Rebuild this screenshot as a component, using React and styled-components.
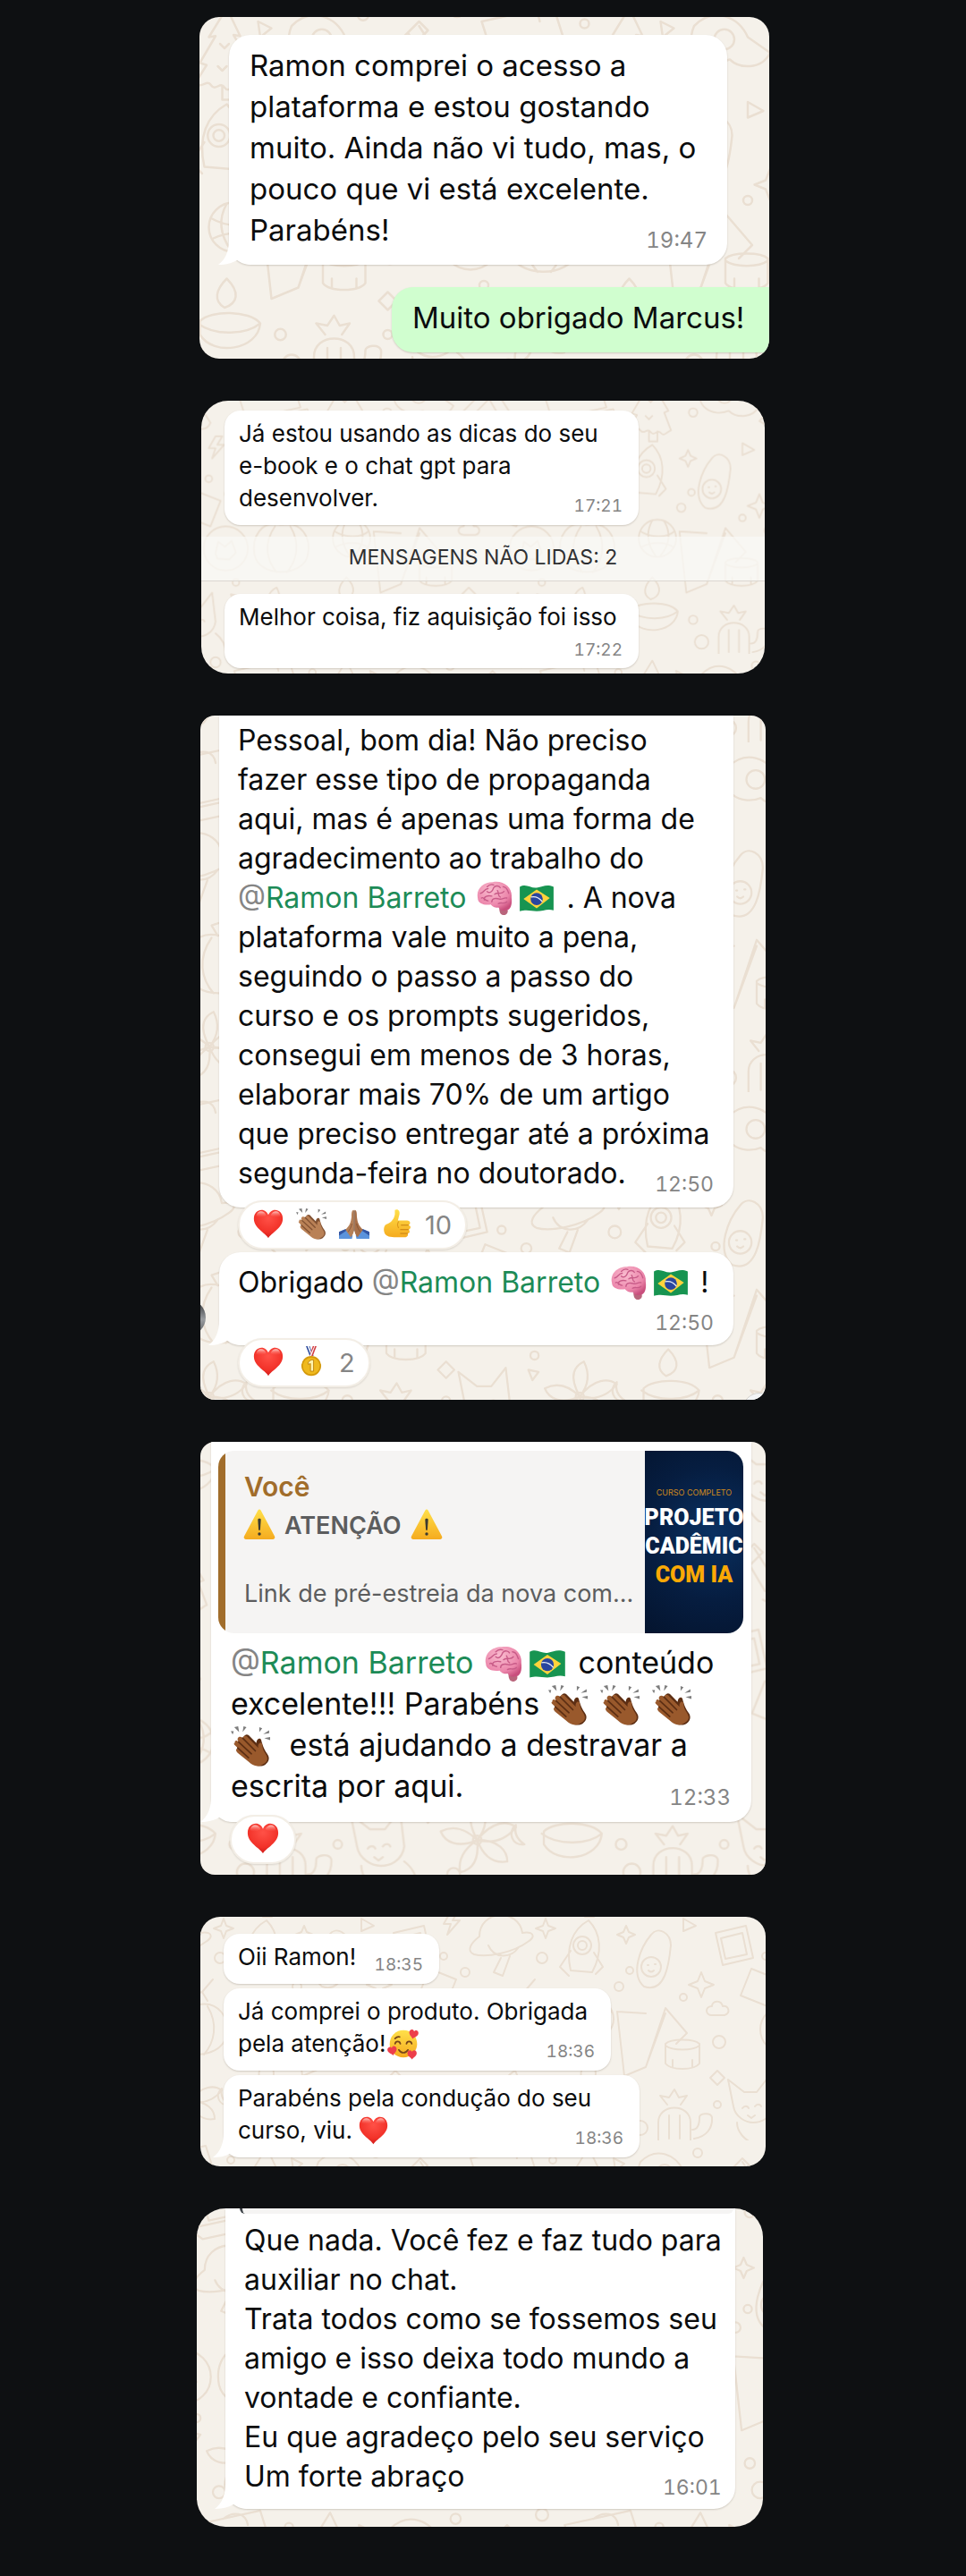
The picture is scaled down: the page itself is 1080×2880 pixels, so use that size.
import React, { useId } from "react";
import styled, { createGlobalStyle } from "styled-components";

const GlobalStyle = createGlobalStyle`
  * { box-sizing: border-box; }
  html, body { margin: 0; background: #0e1012; }
  body { font-family: Inter, "Liberation Sans", sans-serif; color: #0b0c0d; }
`;

/* ---------- page ---------- */

const Page = styled.main`
  display: flex;
  flex-direction: column;
  gap: 47px;
  width: 100%;
  max-width: 640px;
  margin: 0 auto;
  padding: 19px 0 55px;
`;

const sizes = {
  xlarge: { font: 34, line: 46, time: 24, timeLine: 28, drop: 4, radius: 24, pad: "12px 22px 15px 23px" },
  large: { font: 33, line: 46, time: 24, timeLine: 28, drop: 3, radius: 24, pad: "11px 22px 16px 23px" },
  medium: { font: 32, line: 44, time: 23, timeLine: 28, drop: 4, radius: 24, pad: "11px 22px 15px 21px" },
  small: { font: 26, line: 36, time: 19, timeLine: 20, drop: 1, radius: 18, pad: "8px 18px 12px 16px" },
};

const Card = styled.section`
  position: relative;
  isolation: isolate;
  overflow: hidden;
  display: flex;
  flex-direction: column;
  align-items: flex-start;
  align-self: ${(p) => p.$align || "center"};
  width: 100%;
  max-width: ${(p) => p.$width || 632}px;
  padding: ${(p) => p.$pad};
  gap: ${(p) => p.$gap || 0}px;
  border-radius: ${(p) => p.$radius}px;
  background: #f5f1ea;
`;

const WallpaperSvg = styled.svg`
  position: absolute;
  inset: 0;
  z-index: -1;
  width: 100%;
  height: 100%;
  fill: none;
  stroke: #eadfd2;
  stroke-width: 2;
  stroke-linecap: round;
  stroke-linejoin: round;
`;

/* ---------- messages ---------- */

const Bubble = styled.article`
  position: relative;
  isolation: isolate;
  display: grid;
  align-content: start;
  width: ${(p) => p.$width}px;
  max-width: 100%;
  padding: ${(p) => p.$pad || sizes[p.$size].pad};
  border-radius: ${(p) => p.$corners || `${sizes[p.$size].radius}px`};
  margin-left: ${(p) => (p.$sent ? "auto" : "0")};
  background: ${(p) => (p.$sent ? "#d0fecf" : "#fff")};
  box-shadow: 0 1px 2px rgba(60, 45, 25, 0.2);
`;

const Text = styled.p`
  grid-area: 1 / 1;
  margin: 0;
  white-space: nowrap;
  font-size: ${(p) => sizes[p.$size].font}px;
  line-height: ${(p) => sizes[p.$size].line}px;
`;

const Time = styled.time`
  grid-area: ${(p) => (p.$below ? "2 / 1" : "1 / 1")};
  place-self: end;
  margin-top: ${(p) => (p.$below ? 9 : 0)}px;
  margin-bottom: ${(p) => (p.$below ? 0 : -sizes[p.$size].drop)}px;
  font-size: ${(p) => sizes[p.$size].time}px;
  line-height: ${(p) => sizes[p.$size].timeLine}px;
  font-variant-numeric: tabular-nums;
  color: #858585;
`;

const TailSvg = styled.svg`
  position: absolute;
  z-index: -1;
  left: -12px;
  bottom: 0;
  width: 36px;
  height: 40px;
  fill: #fff;
`;

const Mention = styled.a`
  color: #1d8b57;
  text-decoration: none;
  &::before { content: "@"; color: #858585; }
`;

const EmojiSvg = styled.svg`
  display: inline-block;
  flex: none;
  width: ${(p) => p.$px}px;
  height: ${(p) => p.$px}px;
  margin: -8px ${(p) => p.$after || 0}px -4px ${(p) => p.$before || 0}px;
  vertical-align: middle;
  overflow: visible;
`;

const Reactions = styled.button`
  position: relative;
  display: flex;
  align-items: center;
  gap: 14px;
  height: 55px;
  margin: -8px 0 3px 21px;
  padding: 0 15px;
  border: 2px solid #f3eee6;
  border-radius: 28px;
  background: #fff;
  box-shadow: 0 1px 2px rgba(60, 45, 25, 0.14);
  font: 400 29px/34px Inter, "Liberation Sans", sans-serif;
  color: #858585;
`;

const UnreadBand = styled.div`
  align-self: stretch;
  margin: 13px 0 14px -26px;
  height: 50px;
  border-bottom: 1px solid #dbd7d1;
  background: rgba(250, 249, 247, 0.72);
  text-align: center;
  font-size: 23px;
  line-height: 46px;
  color: #2f3032;
`;

const Quote = styled.blockquote`
  display: flex;
  height: 204px;
  margin: 0 0 10px;
  overflow: hidden;
  border-radius: 18px;
  background: linear-gradient(to right, #a16d2b 8px, #f5f4f3 8px);
`;

const QuoteBody = styled.div`
  flex: 1;
  min-width: 0;
  padding: 18px 18px 0 29px;
  font-size: 27px;
  line-height: 36px;
  color: #5c5d5e;
`;

const QuoteAuthor = styled.cite`
  display: block;
  margin-bottom: 4px;
  font-style: normal;
  font-weight: 600;
  font-size: 30px;
  line-height: 44px;
  color: #a16d2b;
`;

const QuoteTitle = styled.strong`
  display: flex;
  align-items: center;
  gap: 11px;
  margin-bottom: 40px;
  font-weight: 600;
  font-size: 27px;
`;

const QuoteLink = styled.span`
  display: block;
  white-space: nowrap;
`;

const Poster = styled.div`
  display: flex;
  flex-direction: column;
  align-items: center;
  flex: none;
  width: 110px;
  padding-top: 40px;
  background: radial-gradient(circle at 70% 45%, #0a3162 0%, #061d40 55%, #04142e 100%);
  color: #fff;
  white-space: nowrap;
  font: 900 25px/32px Roboto, "Liberation Sans", sans-serif;
`;

const PosterKicker = styled.span`
  margin-bottom: 5px;
  font: 400 9px/14px Inter, sans-serif;
  color: #d08a1c;
`;

const PosterAccent = styled.span`
  color: #fba905;
`;

const QuoteEdge = styled.div`
  height: 6px;
  margin: 0 -13px 8px -5px;
  border-left: 3px solid #3b4046;
  border-radius: 0 0 12px 12px;
  background: #f5f4f3;
`;

const PlainBody = styled.div`
  display: grid;
  padding: ${(p) => p.$pad};
`;

const AvatarEdge = styled.i`
  position: absolute;
  left: -34px;
  bottom: 72px;
  width: 40px;
  height: 40px;
  border-radius: 50%;
  background: linear-gradient(#26282b, #9a9da0 55%, #55585b);
`;

const ScrollEdge = styled.i`
  position: absolute;
  right: -12px;
  bottom: -30px;
  width: 38px;
  height: 38px;
  border: 1px solid #d4d2ce;
  border-radius: 50%;
  background: #f4f5f6;
`;

/* ---------- drawings ---------- */

function Wallpaper({ scale = 1, x = 0, y = 0 }) {
  const id = useId();
  return (
    <WallpaperSvg aria-hidden="true">
      <defs>
        <pattern id={id} width="360" height="340" patternUnits="userSpaceOnUse" patternTransform={`translate(${x} ${y}) scale(${scale})`}>
          {/* rocket */}
          <path d="M14 150c-6-26 2-46 20-56 14 14 16 36 4 58zM14 128l-12 18 10 10M40 130l10 16-8 8" />
          <circle cx="27" cy="122" r="10" /><circle cx="27" cy="122" r="5" />
          {/* tree */}
          <path d="M34 8 18 34l6-1-14 24 6 2-10 16c6 6 10-4 14 2s8-4 12 2 8-4 12 1 8-2 12-3L48 56l5-2-13-22 6 1zM30 78v12h10V78M28 40l4 4 4-4M26 60l4 4 4-4" />
          {/* fox */}
          <path d="M196 302l-6-30 18 14h14l14-18 4 34c-2 14-14 18-22 18s-20-6-22-18zM206 304c2-3 6-3 7 0M220 302c2-3 6-3 7 0M212 312l4 3 4-3M200 320c0 10 8 20 20 24M240 316c8 6 12 14 12 24" />
          {/* cactus */}
          <path d="M112 340v-20c0-22 36-22 36 0v20M124 338v-26M136 338v-26M122 300l-8-10 10 2 6-9 5 9 9-2-7 10M150 328c8 0 8-10 8-14s12-6 14 0c1 12-6 22-20 24" />
          {/* lantern and cup */}
          <path d="M34 250c-10 10-12 20-2 26 12-4 14-14 2-26M10 288c10-10 44-10 54 2-2 24-42 30-54 10zM8 290c16 12 44 10 56 0" />
          <path d="M120 232c6-6 32-6 38 0v22c-6 8-32 8-38 0zM120 234c8 6 30 6 38 0M128 258v-8M150 258v-8" />
          {/* book */}
          <path d="M66 196l8 72 24-10 22-60M98 258l22-66 24 28-12 12M66 196l32 2" />
          {/* donut and crown */}
          <circle cx="252" cy="216" r="26" /><path d="M240 222l3-14 8 6 8-7 5 14-8 8-14-1z" />
          {/* globe */}
          <circle cx="40" cy="204" r="22" /><path d="M20 196c14 8 30 8 40 0M22 214c12-6 26-6 36 0M34 183c-8 14-6 28 4 42M48 184c8 14 6 28-4 40" />
          {/* pumpkin */}
          <path d="M318 188c-24-6-36 14-32 36 6 26 54 26 62 2 6-24-8-42-30-38zM310 190c-14 20-10 40 2 54M328 190c12 20 8 40-4 54M316 188l-6-10 12-4 12-14M322 174l6 10" />
          {/* planet */}
          <path d="M272 112c0-30 44-32 48-4 12-2 16 4 6 10-16 12-46 18-60 14-10-4-2-14 6-20zM282 122c6 14 24 16 34 2M296 136l-8 16 10 4 8-22" />
          {/* laptop */}
          <path d="M262 20l64-14 14 44-64 14zM256 72l92-20 6 12-84 18zM290 14c10-8 22-6 24 6" />
          {/* guitar and bulb */}
          <path d="M92 24c18-18 40-8 48 10l20 14c-8 16-28 14-36 6-20 8-42-6-32-30zM110 36a9 9 0 1 0 18 0 9 9 0 1 0-18 0" />
          <path d="M160 66l46-46 8 8-44 44zM196 30l20 34M206 24l28 44c-4 10-14 8-20 4" />
          {/* photo frames */}
          <path d="M176 108l34-8 8 36-34 8zM182 114l24-6 5 24-24 5zM216 148l30 12-12 30-30-12z" />
          {/* avocado */}
          <path d="M96 168c-16-14-4-44 8-58 8-10 22-2 22 12-2 20-6 54-30 46z" /><circle cx="104" cy="146" r="11" /><path d="M100 144h1M108 143h1M101 150c2 2 4 2 6 0" />
          {/* flower */}
          <path d="M308 296c-12-22-4-30 4-34 6 12 4 24-4 34zM308 296c14-18 28-18 36-12-8 10-20 16-36 12zM308 296c20 0 28 10 28 20-12 2-22-4-28-20zM308 296c2 20-6 28-16 30-2-12 4-22 16-30zM308 296c-18 8-30 2-34-8 12-6 24-2 34 8z" />
          <circle cx="308" cy="296" r="4" />
          {/* sparks, bolts and pebbles */}
          <path d="M160 152l4 10 10 4-10 4-4 10-4-10-10-4 10-4zM346 92l3 8 8 3-8 3-3 8-3-8-8-3 8-3zM76 100l3 7 7 3-7 3-3 7-3-7-7-3 7-3zM240 84l-8 14h8l-4 12 14-16h-8l6-10zM170 270l8-8 8 8-8 8zM62 20l12 6-10 8zM172 190c-8 0-8 10 0 10h14c8-2 4-12-2-10-2-8-12-6-12 0z" />
          <path d="M352 300c-12 2-16-12-8-18-2 8 2 14 8 18zM258 270l10 2-6 8zM140 92l14 8-14 6z" />
          <circle cx="82" cy="56" r="5" /><circle cx="80" cy="150" r="4" /><circle cx="180" cy="230" r="7" /><circle cx="82" cy="300" r="5" />
          <circle cx="92" cy="326" r="8" /><circle cx="178" cy="300" r="4" /><circle cx="264" cy="256" r="4" /><circle cx="156" cy="14" r="5" />
          <circle cx="240" cy="10" r="6" /><circle cx="342" cy="136" r="6" /><circle cx="256" cy="152" r="5" /><circle cx="140" cy="180" r="4" />
          <circle cx="68" cy="168" r="5" /><circle cx="354" cy="22" r="4" /><circle cx="286" cy="328" r="6" /><circle cx="232" cy="134" r="4" />
        </pattern>
      </defs>
      <rect width="100%" height="100%" fill={`url(#${id})`} stroke="none" />
    </WallpaperSvg>
  );
}

const Tail = () => (
  <TailSvg viewBox="0 0 36 40" aria-hidden="true">
    <path d="M12 0V12C12 25 8 34 0 40C9 40 17 38 22 34C25 37 29 39 36 40V0Z" />
  </TailSvg>
);

const DefsSvg = styled.svg`
  position: absolute;
  width: 0;
  height: 0;
`;

const Defs = () => (
  <DefsSvg aria-hidden="true">
    <defs>
      <radialGradient id="heartRed" cx="50%" cy="30%" r="75%"><stop offset="0" stopColor="#ff5147" /><stop offset=".65" stopColor="#f23229" /><stop offset="1" stopColor="#c81818" /></radialGradient>
      <linearGradient id="shine" x2="0" y2="1"><stop offset="0" stopColor="#ffd9d4" stopOpacity=".9" /><stop offset="1" stopColor="#ff6a60" stopOpacity="0" /></linearGradient>
      <linearGradient id="gold" x2="0" y2="1"><stop offset="0" stopColor="#ffe04a" /><stop offset="1" stopColor="#f5ab1f" /></linearGradient>
      <radialGradient id="pink" cx="40%" cy="30%" r="75%"><stop offset="0" stopColor="#f9bccf" /><stop offset=".7" stopColor="#ec86ab" /><stop offset="1" stopColor="#c94f7d" /></radialGradient>
    </defs>
  </DefsSvg>
);

const heartPath = "M20 39C16 32 1 26 1 13.500C1 6 6 2 11 2C15.500 2 18.500 5 20 8.500C21.500 5 24.500 2 29 2C34 2 39 6 39 13.500C39 26 24 32 20 39Z";

const drawings = {
  heart: (
    <>
      <path d={heartPath} fill="url(#heartRed)" />
      <path d="M4 10c1-8 11-8 13-1-3 3-10 4-13 1zM23 9c3-7 12-7 13 1-3 3-10 2-13-1z" fill="url(#shine)" />
    </>
  ),
  clap: (skin, shade) => (
    <>
      <path d="M3 5l-3 0 2 3.500zM3.500 1l5 5-1-6zM12 6l1-6 3 1zM29 6l0-5 3 1zM33 8l6-4 0 3zM34 12l6-1 0 3z" fill="#7d7d7d" />
      <path d="M13 11c2-4 5-3 7 0l6 6c0-4 4-6 5-3 1 4 2 8 6 14 3 4 2 8-2 11-5 3-10 1-14-2z" fill={shade} />
      <path d="M4 17c0-3 2-3 4-1-3-4 1-7 4-4 1-3 4-3 6 0l10 10c-1-4 2-7 4-4 0 5 2 8 4 11 3 5 0 8-4 10-5 3-10 1-14-3L7 27c-3-3-1-5 1-4l-4-4c-1-1-1-2 0-2z" fill={skin} />
      <path d="M8 16l13 12M12 12l13 13M7 22l11 10" stroke={shade} strokeWidth="1.500" strokeLinecap="round" fill="none" />
    </>
  ),
  pray: (
    <>
      <path d="M0 31l9-4 9 9-1 4H0zM40 31l-9-4-9 9 1 4h17z" fill="#5b93dc" />
      <path d="M0 31l9-4 1 2-10 7zM40 31l-9-4-1 2 10 7z" fill="#3456a3" />
      <path d="M19.500 2c-3 0-3 5-3 9-1 8-2 11-8 17l7 10c3-3 4-6 4-10z" fill="#b58058" />
      <path d="M20.500 2c3 0 3 5 3 9 1 8 2 11 8 17l-7 10c-3-3-4-6-4-10z" fill="#a87049" />
      <path d="M20 3v27" stroke="#70452a" strokeWidth="1.200" />
      <path d="M17 20c-1 5-3 8-5 11M23 20c1 5 3 8 5 11" stroke="#835333" fill="none" />
    </>
  ),
  thumb: (
    <>
      <path d="M17 2c4-2 7 1 6 6l-2 8h12c5 0 5 5 2 6 4 1 3 5 0 6 2 1 2 5-1 5 1 3-1 5-4 5H16C9 38 4 36 3 31c-1-4 0-9 3-10 6-2 10-7 11-13z" fill="url(#gold)" />
      <path d="M25 22h10M24 28h11M24 33h10" stroke="#c57f10" strokeWidth="1.300" />
      <path d="M22 17c-2 4-2 5 0 9" stroke="#dc981b" strokeWidth="1.300" fill="none" />
    </>
  ),
  brain: (
    <>
      <path d="M25 31c0 5 2 8 6 7 3-1 4-4 2-7z" fill="#b9657c" />
      <path d="M2 20C0 10 8 3 18 3c12-2 21 6 20 16 1 8-1 14-6 14-3 1-6 0-8-3-5 1-7-2-8-3C9 28 2 26 2 20Z" fill="url(#pink)" />
      <path d="M5 15c4-1 4-5 8-5M9 22c-1-4 4-5 8-4M12 13c3 3 6-1 7-4 2-3 6-2 7 0M20 16c4-3 7 1 10-3M17 24c0-4 5-4 8-3s5-2 8-1M6 20c2-2 3 3 7 3M24 26c3-2 6 1 9-2M29 8c4 0 5 4 6 7M23 12c2 3 0 6 3 7M19 6c-3-1-5 0-7 2" stroke="#c85b88" strokeWidth="1.300" strokeLinecap="round" fill="none" />
    </>
  ),
  flag: (
    <>
      <path d="M2 8c7-4 12 2 18 1 7-1 10-4 18-1v25c-7-2-11 1-18 1-6 0-10-2-18 0z" fill="#179451" />
      <path d="M20 11l14 9-14 11L6 21z" fill="#ffd33c" />
      <circle cx="20" cy="21" r="6.500" fill="#29469f" />
      <path d="M14 19c5-1 9 1 12 5" stroke="#e8eef8" strokeWidth="1.300" fill="none" />
    </>
  ),
  medal: (
    <>
      <path d="M13 0h5l5 13h-5z" fill="#2c4b9d" /><path d="M15 0h2l5 13h-2z" fill="#fff" />
      <path d="M22 0h5l-5 13h-4z" fill="#d23d42" /><path d="M24 0h1l-5 13h-2z" fill="#fff" />
      <circle cx="20" cy="26" r="13" fill="#d4990b" /><circle cx="20" cy="26" r="11" fill="#efb91d" />
      <path d="M16 21l4-3h3v15h-4v-10l-3 1z" fill="#fff3ad" stroke="#ba7d08" />
    </>
  ),
  warning: (
    <>
      <path d="M18 2c1-2 3-2 4 0l18 34c1 2 0 4-2 4H2c-2 0-3-2-2-4z" fill="url(#gold)" />
      <path d="M18 14c0-2 4-2 4 0l-1 14h-2z" fill="#3c3a30" /><circle cx="20" cy="33" r="2" fill="#3c3a30" />
    </>
  ),
  adore: (
    <>
      <circle cx="20" cy="20" r="18" fill="url(#gold)" />
      <path d="M9 20c1-4 6-4 7 0M24 20c1-4 6-4 7 0M14 28c3 5 9 5 12 0M9 13c2-2 4-3 6-2" stroke="#764519" strokeWidth="2" strokeLinecap="round" fill="none" />
      <g fill="#ed3e4b">
        <path transform="translate(27 1) rotate(12 6 6) scale(.32)" d={heartPath} />
        <path transform="translate(-1 23) rotate(-12 6 6) scale(.32)" d={heartPath} />
        <path transform="translate(25 28) scale(.32)" d={heartPath} />
      </g>
    </>
  ),
};

const Emoji = ({ name, label, px = 44, before, after }) => (
  <EmojiSvg viewBox="0 0 40 40" role="img" aria-label={label} $px={px} $before={before} $after={after}>
    {name === "clap" ? drawings.clap("#b98156", "#805031") : name === "clapDark" ? drawings.clap("#99592c", "#5c2e13") : drawings[name]}
  </EmojiSvg>
);

const Ramon = ({ px }) => (
  <>
    <Mention href="#ramon-barreto">Ramon Barreto</Mention>{" "}
    <Emoji name="brain" label="cérebro" px={px} before={2} after={5} />
    <Emoji name="flag" label="Brasil" px={px} after={3} />{" "}
  </>
);

const Message = ({ size, width, time, children, tail, below, sent, corners, pad }) => (
  <Bubble $size={size} $width={width} $sent={sent} $corners={corners} $pad={pad}>
    {tail && <Tail />}
    <Text $size={size}>{children}</Text>
    {time && <Time $size={size} $below={below}>{time}</Time>}
  </Bubble>
);

export default function App() {
  return (
    <>
      <GlobalStyle />
      <Defs />
      <Page>
        <Card $width={637} $align="flex-end" $pad="20px 0 7px 33px" $gap={25} $radius={22}>
          <Wallpaper scale={1.25} x={-12} y={-20} />
          <Message size="large" width={557} time="19:47" tail>
            Ramon comprei o acesso a<br />
            plataforma e estou gostando<br />
            muito. Ainda não vi tudo, mas, o<br />
            pouco que vi está excelente.<br />
            Parabéns!
          </Message>
          <Message size="large" width={422} sent corners="24px 0 0 24px">
            Muito obrigado Marcus!
          </Message>
        </Card>

        <Card $width={630} $pad="11px 0 6px 26px" $radius={30}>
          <Wallpaper scale={0.95} x={130} y={-40} />
          <Message size="small" width={463} time="17:21">
            Já estou usando as dicas do seu<br />
            e-book e o chat gpt para<br />
            desenvolver.
          </Message>
          <UnreadBand>MENSAGENS NÃO LIDAS: 2</UnreadBand>
          <Message size="small" width={463} time="17:22" below pad="8px 18px 10px 16px">
            Melhor coisa, fiz aquisição foi isso
          </Message>
        </Card>

        <Card $pad="0 0 11px 21px" $radius={16}>
          <Wallpaper scale={1.15} x={70} y={30} />
          <AvatarEdge />
          <ScrollEdge />
          <Message size="medium" width={575} time="12:50" corners="0 0 24px 24px" pad="6px 22px 16px 21px">
            Pessoal, bom dia! Não preciso<br />
            fazer esse tipo de propaganda<br />
            aqui, mas é apenas uma forma de<br />
            agradecimento ao trabalho do<br />
            <Ramon px={42} />. A nova<br />
            plataforma vale muito a pena,<br />
            seguindo o passo a passo do<br />
            curso e os prompts sugeridos,<br />
            consegui em menos de 3 horas,<br />
            elaborar mais 70% de um artigo<br />
            que preciso entregar até a próxima<br />
            segunda-feira no doutorado.
          </Message>
          <Reactions type="button">
            <Emoji name="heart" label="coração" px={34} />
            <Emoji name="clap" label="palmas" px={34} />
            <Emoji name="pray" label="mãos unidas" px={34} />
            <Emoji name="thumb" label="positivo" px={34} />
            10
          </Reactions>
          <Message size="medium" width={575} time="12:50" tail below pad="12px 22px 11px 21px">
            Obrigado <Ramon px={42} />!
          </Message>
          <Reactions type="button">
            <Emoji name="heart" label="coração" px={34} />
            <Emoji name="medal" label="medalha de ouro" px={34} />
            2
          </Reactions>
        </Card>

        <Card $pad="0 0 9px 12px" $radius={16}>
          <Wallpaper scale={1.2} x={-60} y={90} />
          <Bubble $size="xlarge" $width={604} $corners="0 0 24px 24px" $pad="10px 9px 17px 8px">
            <Tail />
            <Quote>
              <QuoteBody>
                <QuoteAuthor>Você</QuoteAuthor>
                <QuoteTitle>
                  <Emoji name="warning" label="aviso" px={34} />
                  ATENÇÃO
                  <Emoji name="warning" label="aviso" px={34} />
                </QuoteTitle>
                <QuoteLink>Link de pré-estreia da nova com...</QuoteLink>
              </QuoteBody>
              <Poster>
                <PosterKicker>CURSO COMPLETO</PosterKicker>
                <span>PROJETO</span>
                <span>CADÊMIC</span>
                <PosterAccent>COM IA</PosterAccent>
              </Poster>
            </Quote>
            <PlainBody $pad="0 14px">
              <Text $size="xlarge">
                <Ramon px={44} />conteúdo<br />
                excelente!!! Parabéns <Emoji name="clapDark" label="palmas" after={14} />
                <Emoji name="clapDark" label="palmas" after={14} />
                <Emoji name="clapDark" label="palmas" /><br />
                <Emoji name="clapDark" label="palmas" after={12} /> está ajudando a destravar a<br />
                escrita por aqui.
              </Text>
              <Time $size="xlarge">12:33</Time>
            </PlainBody>
          </Bubble>
          <Reactions type="button">
            <Emoji name="heart" label="coração" px={36} before={2} after={2} />
          </Reactions>
        </Card>

        <Card $pad="19px 0 10px 26px" $gap={5} $radius={22}>
          <Wallpaper scale={1} x={40} y={-90} />
          <Message size="small" width={241} time="18:35">Oii Ramon!</Message>
          <Message size="small" width={433} time="18:36">
            Já comprei o produto. Obrigada<br />
            pela atenção!<Emoji name="adore" label="rosto com corações" px={34} before={3} />
          </Message>
          <Message size="small" width={465} time="18:36" tail>
            Parabéns pela condução do seu<br />
            curso, viu. <Emoji name="heart" label="coração" px={33} />
          </Message>
        </Card>

        <Card $width={633} $align="flex-start" $pad="0 0 20px 32px" $radius={32}>
          <Wallpaper scale={1.15} x={110} y={-60} />
          <Bubble $size="medium" $width={570} $corners="0 0 24px 24px" $pad="0 22px 14px 21px">
            <Tail />
            <QuoteEdge />
            <PlainBody $pad="0">
              <Text $size="medium">
                Que nada. Você fez e faz tudo para<br />
                auxiliar no chat.<br />
                Trata todos como se fossemos seu<br />
                amigo e isso deixa todo mundo a<br />
                vontade e confiante.<br />
                Eu que agradeço pelo seu serviço<br />
                Um forte abraço
              </Text>
              <Time $size="medium">16:01</Time>
            </PlainBody>
          </Bubble>
        </Card>
      </Page>
    </>
  );
}
